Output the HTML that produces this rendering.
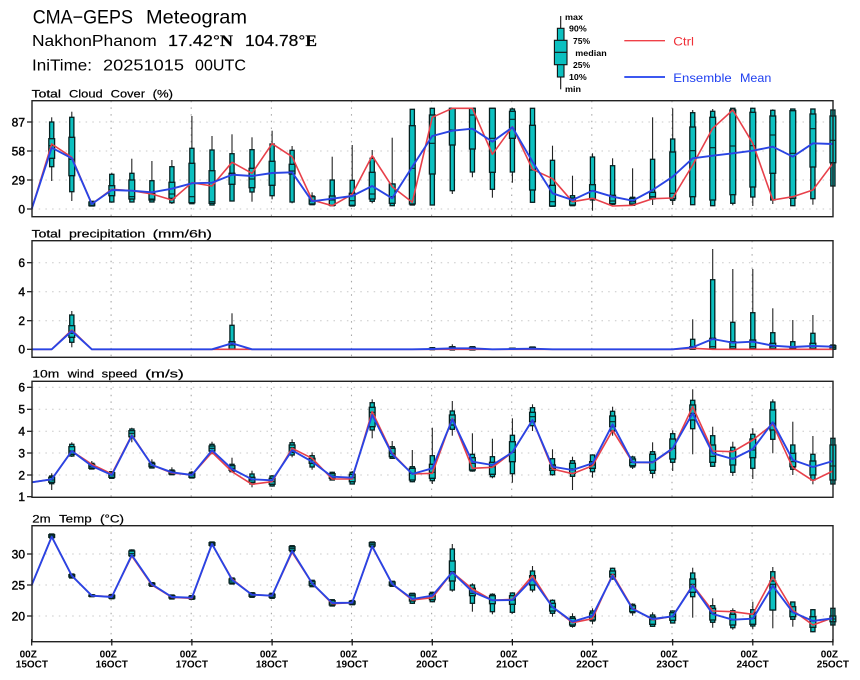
<!DOCTYPE html>
<html><head><meta charset="utf-8"><title>CMA-GEPS Meteogram</title>
<style>
html,body{margin:0;padding:0;background:#fff;width:860px;height:680px;overflow:hidden}
svg{display:block;filter:blur(.35px)}
text{font-family:"Liberation Sans",sans-serif;fill:#000}
.t1{font-size:19.5px}
.t2{font-size:15.5px}
.n2{font-size:15.5px;stroke:#000;stroke-width:.2}
.s{font-family:"Liberation Serif",serif;font-weight:bold}
.h{font-size:11px;stroke:#000;stroke-width:.2}
.y{font-size:12px;text-anchor:end;stroke:#000;stroke-width:.4}
.x{font-size:10px;font-weight:bold;text-anchor:middle}
.l{font-size:8.5px;font-weight:bold}
.lg{font-size:12px}
</style></head><body>
<svg id="c" xmlns="http://www.w3.org/2000/svg" width="860" height="680" viewBox="0 0 860 680">
<rect width="860" height="680" fill="#fff"/>
<g id="plots"></g>
<text class="t1" x="32.7" y="23.6" textLength="100.3" lengthAdjust="spacingAndGlyphs">CMA−GEPS</text>
<text class="t1" x="146" y="23.6" textLength="101" lengthAdjust="spacingAndGlyphs">Meteogram</text>
<text class="t2" x="32" y="46" textLength="124.7" lengthAdjust="spacingAndGlyphs">NakhonPhanom</text>
<text class="n2" x="168" y="46" textLength="65" lengthAdjust="spacingAndGlyphs">17.42°<tspan class="s">N</tspan></text>
<text class="n2" x="245" y="46" textLength="72" lengthAdjust="spacingAndGlyphs">104.78°<tspan class="s">E</tspan></text>
<text class="t2" x="32" y="70.5" textLength="60" lengthAdjust="spacingAndGlyphs">IniTime:</text>
<text class="t2" x="103" y="70.5" textLength="81" lengthAdjust="spacingAndGlyphs">20251015</text>
<text class="t2" x="195" y="70.5" textLength="51" lengthAdjust="spacingAndGlyphs">00UTC</text>

<text class="h" x="31.7" y="97.3" textLength="29.3" lengthAdjust="spacingAndGlyphs">Total</text>
<text class="h" x="69" y="97.3" textLength="33.7" lengthAdjust="spacingAndGlyphs">Cloud</text>
<text class="h" x="110.7" y="97.3" textLength="34.3" lengthAdjust="spacingAndGlyphs">Cover</text>
<text class="h" x="152.7" y="97.3" textLength="20.3" lengthAdjust="spacingAndGlyphs">(%)</text>

<text class="h" x="31.7" y="237.7" textLength="29.3" lengthAdjust="spacingAndGlyphs">Total</text>
<text class="h" x="69" y="237.7" textLength="76.3" lengthAdjust="spacingAndGlyphs">precipitation</text>
<text class="h" x="152.7" y="237.7" textLength="59.3" lengthAdjust="spacingAndGlyphs">(mm/6h)</text>

<text class="h" x="32.3" y="377.7" textLength="27" lengthAdjust="spacingAndGlyphs">10m</text>
<text class="h" x="67.7" y="377.7" textLength="26.3" lengthAdjust="spacingAndGlyphs">wind</text>
<text class="h" x="101.7" y="377.7" textLength="35.6" lengthAdjust="spacingAndGlyphs">speed</text>
<text class="h" x="145.3" y="377.7" textLength="38.4" lengthAdjust="spacingAndGlyphs">(m/s)</text>

<text class="h" x="32.3" y="522.7" textLength="18.4" lengthAdjust="spacingAndGlyphs">2m</text>
<text class="h" x="59" y="522.7" textLength="32.7" lengthAdjust="spacingAndGlyphs">Temp</text>
<text class="h" x="100" y="522.7" textLength="24" lengthAdjust="spacingAndGlyphs">(°C)</text>

<text class="y" x="25" y="126.3">87</text><text class="y" x="25" y="155.3">58</text><text class="y" x="25" y="184.3">29</text><text class="y" x="25" y="213.3">0</text>
<text class="y" x="25" y="267">6</text><text class="y" x="25" y="296">4</text><text class="y" x="25" y="325">2</text><text class="y" x="25" y="353.6">0</text>
<text class="y" x="25" y="391.6">6</text><text class="y" x="25" y="413.6">5</text><text class="y" x="25" y="435.6">4</text><text class="y" x="25" y="457.3">3</text><text class="y" x="25" y="479.3">2</text><text class="y" x="25" y="501">1</text>
<text class="y" x="25" y="558.3">30</text><text class="y" x="25" y="589.3">25</text><text class="y" x="25" y="620.3">20</text>

<g class="xl">
<text class="x" x="28.2" y="657.3">00Z</text><text class="x" x="31.9" y="667.6">15OCT</text>
<text class="x" x="108.3" y="657.3">00Z</text><text class="x" x="111.8" y="667.6">16OCT</text>
<text class="x" x="188.4" y="657.3">00Z</text><text class="x" x="191.9" y="667.6">17OCT</text>
<text class="x" x="268.5" y="657.3">00Z</text><text class="x" x="272" y="667.6">18OCT</text>
<text class="x" x="348.6" y="657.3">00Z</text><text class="x" x="352.1" y="667.6">19OCT</text>
<text class="x" x="428.7" y="657.3">00Z</text><text class="x" x="432.2" y="667.6">20OCT</text>
<text class="x" x="508.8" y="657.3">00Z</text><text class="x" x="512.3" y="667.6">21OCT</text>
<text class="x" x="588.9" y="657.3">00Z</text><text class="x" x="592.4" y="667.6">22OCT</text>
<text class="x" x="669" y="657.3">00Z</text><text class="x" x="672.5" y="667.6">23OCT</text>
<text class="x" x="749.1" y="657.3">00Z</text><text class="x" x="752.6" y="667.6">24OCT</text>
<text class="x" x="829.4" y="657.3">00Z</text><text class="x" x="832.9" y="667.6">25OCT</text>
</g>

<g stroke="#111" stroke-width="1.1">
<path d="M560.7 16V89.3" fill="none"/>
<rect x="557.4" y="28.3" width="6.6" height="48.7" fill="#0cc0c0"/>
<rect x="554.4" y="40.3" width="12.6" height="24.4" fill="#0cc0c0"/>
<path d="M554.4 52.3H567" fill="none"/>
</g>
<text class="l" x="565" y="20" textLength="18" lengthAdjust="spacingAndGlyphs">max</text>
<text class="l" x="569" y="31.7" textLength="17.7" lengthAdjust="spacingAndGlyphs">90%</text>
<text class="l" x="573" y="44" textLength="17" lengthAdjust="spacingAndGlyphs">75%</text>
<text class="l" x="575.3" y="56" textLength="31.4" lengthAdjust="spacingAndGlyphs">median</text>
<text class="l" x="573" y="68" textLength="17" lengthAdjust="spacingAndGlyphs">25%</text>
<text class="l" x="569" y="80" textLength="17.7" lengthAdjust="spacingAndGlyphs">10%</text>
<text class="l" x="565" y="92" textLength="16" lengthAdjust="spacingAndGlyphs">min</text>

<path d="M624.3 40.7H665" stroke="#ef4048" stroke-width="1.4" fill="none"/>
<text class="lg" x="673.3" y="45.3" textLength="20.7" lengthAdjust="spacingAndGlyphs" style="fill:#ef3038">Ctrl</text>
<path d="M624.3 77H665" stroke="#2040ee" stroke-width="1.8" fill="none"/>
<text class="lg" x="673.3" y="82" textLength="58.4" lengthAdjust="spacingAndGlyphs" style="fill:#2040f0">Ensemble</text>
<text class="lg" x="740" y="82" textLength="31.3" lengthAdjust="spacingAndGlyphs" style="fill:#2040f0">Mean</text>
</svg>
<script>
(function(){
var X=function(i){return 31.7+20.03*i};
var s='';
function panel(top,bot,off,gy,ticks,boxes,ctrl,mean){
  gy.forEach(function(y){
    s+='<path d="M32 '+y+'H833" stroke="#c8c8c8" stroke-width="1" stroke-dasharray="1.5 5.2" fill="none"/>';
  });
  ticks.forEach(function(y){
    s+='<path d="M27 '+y+'H32" stroke="#111" stroke-width="1.2" fill="none"/>';
  });
  for(var k=1;k<10;k++){
    var x=X(k*4)-0.7;
    s+='<path d="M'+x.toFixed(1)+' '+top+'V'+bot+'" stroke="#a8a8a8" stroke-width="1.1" stroke-dasharray="1.5 5.2" fill="none"/>';
  }
  boxes.forEach(function(b){
    var x=X(b[0]),c=x.toFixed(1);
    var v=b.slice(1).map(function(z){return +(off+z/3).toFixed(1)});
    var wi=4.2,wo=5.8;
    s+='<path d="M'+c+' '+v[0]+'V'+v[6]+'" stroke="#222" stroke-width="1.1" fill="none"/>';
    s+='<rect x="'+(x-wi/2).toFixed(1)+'" y="'+v[1]+'" width="'+wi+'" height="'+Math.max(v[5]-v[1],.5).toFixed(1)+'" fill="#0cc0c0" stroke="#062020" stroke-width="1.3"/>';
    s+='<rect x="'+(x-wo/2).toFixed(1)+'" y="'+v[2]+'" width="'+wo+'" height="'+Math.max(v[4]-v[2],.5).toFixed(1)+'" fill="#0cc0c0" stroke="#062020" stroke-width="1.3"/>';
    s+='<path d="M'+(x-wo/2).toFixed(1)+' '+v[3]+'H'+(x+wo/2).toFixed(1)+'" stroke="#062020" stroke-width="1.1" fill="none"/>';
  });
  function line(a,col,w){
    var d=a.map(function(z,i){return (i?'L':'M')+X(i).toFixed(1)+' '+(off+z/3).toFixed(1)}).join('');
    s+='<path d="'+d+'" stroke="'+col+'" stroke-width="'+w+'" fill="none" stroke-linejoin="round"/>';
  }
  line(ctrl,'#e8404a',1.6);
  line(mean,'#2a44e4',1.9);
  s+='<rect x="32" y="'+top+'" width="801" height="'+(bot-top)+'" fill="none" stroke="#222" stroke-width="1.4"/>';
}
var p1=[[1,352,366,416,437,475,500,543],[2,335,352,412,478,527,575,603],[3,603,604,606,612,617,618,618],[4,518,523,557,570,587,606,608],[5,476,520,540,590,597,606,607],[6,483,542,580,597,600,606,607],[7,480,500,547,582,595,608,612],[8,348,445,490,590,608,611,612],[9,408,450,512,605,610,615,616],[10,403,461,520,520,553,603,604],[11,412,449,505,537,563,576,605],[12,392,432,484,520,556,587,598],[13,438,451,493,513,522,606,610],[14,577,588,590,603,612,614,615],[15,470,540,588,600,616,617,618],[16,435,541,580,602,616,618,618],[17,450,475,517,582,597,604,610],[18,413,552,552,590,610,617,618],[19,328,328,377,505,612,615,615],[20,325,325,345,430,522,615,615],[21,325,325,325,390,435,572,582],[22,325,325,325,345,447,516,532],[23,325,325,325,415,517,568,593],[24,323,327,334,358,415,516,548],[25,325,325,376,510,570,607,608],[26,437,481,556,605,618,619,619],[27,527,587,594,603,615,617,618],[28,460,471,554,572,596,600,632],[29,475,497,586,603,611,613,614],[30,505,592,595,605,612,616,618],[31,352,478,577,590,595,597,615],[32,325,417,456,580,596,601,615],[33,330,338,381,452,590,614,615],[34,327,334,352,443,600,617,618],[35,325,325,330,438,584,610,616],[36,325,325,337,437,561,591,618],[37,328,331,348,405,520,600,612],[38,327,327,332,460,595,617,618],[39,327,327,342,386,501,596,614],[40,328,330,348,421,488,558,560]];
panel(100.7,216.7,0,[122,151,180,209],[122,151,180,209],p1,
[627,432,472,612,568,572,582,600,548,558,487,520,431,470,600,617,583,467,560,607,352,325,325,463,380,508,536,605,595,618,616,596,594,495,385,330,430,600,590,570,490],
[627,443,475,612,570,572,577,566,550,548,524,528,519,517,604,596,588,558,595,500,408,392,386,425,382,485,580,600,572,590,602,570,530,475,467,460,452,440,470,430,432]);

var p2=[[2,258,270,302,325,337,352,367],[10,265,301,350,360,372,373,373],[20,366,368,370,372,373,374,374],[21,358,365,366,370,373,375,375],[22,364,365,367,370,374,375,375],[24,369,370,370,372,373,373,373],[25,365,366,367,370,373,373,373],[33,283,343,365,370,372,373,373],[34,72,164,340,365,371,372,372],[35,132,292,350,365,371,372,372],[36,132,263,345,365,371,372,372],[37,250,323,355,365,371,372,372],[38,285,350,365,370,372,373,373],[39,270,325,355,365,371,372,372],[40,358,360,362,367,372,373,373]];
var c2=[],m2=[];for(var i=0;i<41;i++){c2.push(373);m2.push(373)}
c2[2]=315;m2[2]=318;m2[10]=355;
m2[20]=372;m2[21]=370;m2[22]=370;m2[24]=372;m2[25]=371;
m2[33]=367;m2[34]=342;m2[35]=353;m2[36]=350;m2[37]=362;m2[38]=366;m2[39]=363;m2[40]=365;c2[33]=370;
panel(240.7,357.3,225,[262.7,291.7,320.7],[262.7,291.7,320.7,349.3],p2,c2,m2);

var p3=[[1,325,333,337,345,352,356,375],[2,232,238,245,258,268,273,276],[3,288,295,298,305,310,312,313],[4,318,320,323,330,337,340,341],[5,188,192,197,205,215,218,232],[6,283,292,295,300,305,309,310],[7,307,315,318,322,327,329,330],[8,318,322,325,330,337,339,340],[9,230,238,243,250,258,264,268],[10,278,298,302,310,316,320,322],[11,317,327,337,345,352,357,367],[12,330,333,340,350,358,363,365],[13,223,233,240,248,262,270,277],[14,262,272,280,285,295,306,314],[15,320,322,326,333,340,345,346],[16,318,322,328,338,350,357,358],[17,103,113,127,142,185,195,220],[18,228,245,250,265,275,280,282],[19,255,305,310,325,345,350,352],[20,188,272,298,322,340,347,357],[21,108,138,150,165,180,193,212],[22,205,268,278,295,315,318,320],[23,221,275,292,305,328,335,340],[24,160,211,230,262,290,326,353],[25,118,128,142,155,170,182,198],[26,253,281,300,310,316,329,332],[27,275,287,295,312,325,334,375],[28,268,270,290,300,310,320,338],[29,125,139,153,170,185,198,212],[30,272,276,282,292,302,306,312],[31,232,260,268,290,316,325,340],[32,196,206,222,250,282,292,318],[33,73,106,120,145,165,191,268],[34,185,212,240,274,292,304,305],[35,230,247,258,280,300,322,333],[36,190,208,222,255,278,310,342],[37,103,111,135,175,195,223,265],[38,170,240,265,290,305,313,330],[39,213,268,288,306,330,345,358],[40,220,220,240,303,345,357,358]];
panel(381.3,497.3,365,[387.3,409.3,431.3,453,475],[387.3,409.3,431.3,453,475,496.7],p3,
[352,343,258,298,327,210,300,324,330,262,320,358,350,250,280,342,342,140,265,327,325,160,310,307,262,165,312,326,302,196,292,293,252,125,258,260,225,178,308,347,318],
[352,343,258,303,330,212,300,322,330,256,312,343,346,256,290,335,338,150,268,327,310,163,290,300,262,165,305,315,295,178,292,292,250,145,265,282,252,172,285,306,288]);

var p4=[[1,86,87,89,93,97,99,100],[2,206,207,209,212,216,219,220],[3,268,269,270,272,274,275,276],[4,268,269,271,275,279,281,282],[5,133,135,138,146,152,154,155],[6,232,233,235,237,241,244,245],[7,269,270,272,275,279,282,283],[8,271,272,274,278,281,283,284],[9,110,111,113,117,121,123,124],[10,218,219,222,228,234,237,238],[11,262,263,265,269,274,277,278],[12,264,265,268,272,277,280,281],[13,121,122,125,130,136,140,141],[14,225,226,229,235,241,245,246],[15,283,284,287,294,300,303,304],[16,286,287,289,293,297,299,300],[17,110,111,113,118,123,126,127],[18,228,229,231,237,241,244,245],[19,264,265,267,272,288,295,297],[20,260,262,266,273,284,290,292],[21,117,132,168,200,228,255,260],[22,235,240,250,265,272,295,320],[23,265,268,272,285,296,320,328],[24,262,264,272,285,298,322,326],[25,183,198,212,225,240,255,262],[26,283,286,295,306,318,325,335],[27,325,335,340,350,360,364,368],[28,310,318,324,335,345,348,358],[29,188,190,198,208,216,222,224],[30,295,298,302,311,320,323,332],[31,322,330,336,344,358,364,365],[32,316,318,323,335,346,354,355],[33,188,204,222,238,262,275,338],[34,280,302,310,325,345,352,368],[35,310,317,328,345,360,368,374],[36,290,314,328,340,358,363,373],[37,186,200,228,238,315,315,370],[38,290,291,305,320,335,343,365],[39,312,314,335,348,367,380,382],[40,309,310,333,342,350,360,362]];
panel(525.7,641.7,505,[554,585,616],[554,585,616],p4,
[240,95,212,272,275,153,240,277,280,117,222,269,272,142,235,296,293,125,237,285,278,202,252,286,283,212,306,353,341,208,310,344,334,240,318,320,328,216,316,360,338],
[240,95,212,272,276,150,238,276,278,117,224,269,272,138,235,294,293,124,237,282,272,202,260,286,285,222,306,350,332,212,312,342,334,242,327,344,341,242,322,348,340]);

for(var k=0;k<=10;k++){
  var x=X(k*4).toFixed(1);
  s+='<path d="M'+x+' 639V645.5" stroke="#111" stroke-width="1.2" fill="none"/>';
}
document.getElementById('plots').innerHTML=s;
})();
</script>
</body></html>
